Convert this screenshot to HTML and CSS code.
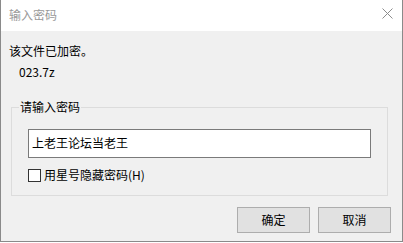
FILE: index.html
```html
<!DOCTYPE html>
<html lang="zh-CN">
<head>
<meta charset="utf-8">
<title>输入密码</title>
<link rel="stylesheet" href="styles.css">
</head>
<body>
<div class="window">
  <div class="titlebar">
    <span class="title">输入密码</span>
    <svg class="close" width="11" height="11" viewBox="0 0 11 11"><path d="M0.5 0.5 L10.5 10.5 M10.5 0.5 L0.5 10.5" stroke="#8c8c8c" stroke-width="1" fill="none"/></svg>
  </div>
  <div class="content">
    <div class="msg">该文件已加密。</div>
    <div class="file">023.7z</div>
    <fieldset class="group">
      <legend class="legend">请输入密码</legend>
      <div class="input">上老王论坛当老王</div>
      <label class="check"><span class="box"></span><span>用星号隐藏密码(H)</span></label>
    </fieldset>
    <div class="buttons">
      <div class="btn">确定</div>
      <div class="btn">取消</div>
    </div>
  </div>
</div>
</body>
</html>
```
FILE: styles.css
```css
html, body {
  margin: 0;
  padding: 0;
  background: #ffffff;
}
body {
  font-family: "Noto Sans CJK SC", "Noto Sans", sans-serif;
  font-size: 12px;
  color: #000;
}
.window {
  width: 401px;
  height: 241px;
  border-left: 1px solid #8a8a8a;
  border-right: 1px solid #8a8a8a;
  border-bottom: 1px solid #8a8a8a;
  background: #f0f0f0;
  display: flex;
  flex-direction: column;
}
.titlebar {
  height: 31px;
  background: #ffffff;
  display: flex;
  align-items: center;
  justify-content: space-between;
  padding: 0 9px 2px 8px;
  box-sizing: border-box;
}
.title {
  color: #999999;
  font-size: 12px;
  line-height: 16px;
  margin-top: 1px;
}
.close {
  display: block;
  margin-bottom: 2px;
}
.content {
  padding: 12px 0 0 0;
}
.msg {
  line-height: 16px;
  padding-left: 8px;
}
.file {
  line-height: 16px;
  padding-left: 18px;
  margin-top: 5px;
}
.group {
  margin: 19px 0 0 10px;
  width: 377px;
  box-sizing: border-box;
  border: 1px solid #dcdcdc;
  padding: 0 16px 12px 16px;
  min-width: 0;
}
.legend {
  padding: 0 1px;
  margin-left: -9px;
  line-height: 16px;
}
.input {
  margin-top: 14px;
  height: 29px;
  box-sizing: border-box;
  border: 1px solid #7a7a7a;
  background: #ffffff;
  line-height: 26px;
  padding-left: 3px;
  font-size: 12px;
}
.check {
  display: flex;
  align-items: center;
  margin-top: 9px;
  line-height: 16px;
}
.box {
  width: 13px;
  height: 13px;
  box-sizing: border-box;
  border: 1px solid #333333;
  background: #ffffff;
  margin-right: 3px;
}
.buttons {
  display: flex;
  justify-content: flex-end;
  gap: 8px;
  padding-right: 11px;
  margin-top: 11px;
}
.btn {
  width: 73px;
  height: 26px;
  box-sizing: border-box;
  border: 1px solid #adadad;
  background: #e1e1e1;
  display: flex;
  align-items: center;
  justify-content: center;
  line-height: 16px;
}
```
